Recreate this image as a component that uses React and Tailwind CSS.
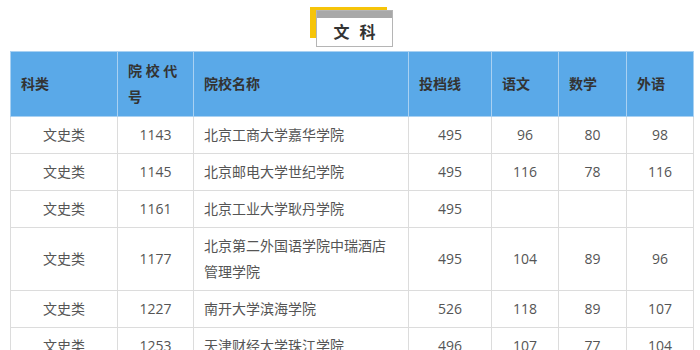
import React from 'react';

const rows = [
  { type: '文史类', code: '1143', name: '北京工商大学嘉华学院', line: '495', cn: '96', math: '80', en: '98' },
  { type: '文史类', code: '1145', name: '北京邮电大学世纪学院', line: '495', cn: '116', math: '78', en: '116' },
  { type: '文史类', code: '1161', name: '北京工业大学耿丹学院', line: '495', cn: '', math: '', en: '' },
  { type: '文史类', code: '1177', name: '北京第二外国语学院中瑞酒店管理学院', line: '495', cn: '104', math: '89', en: '96' },
  { type: '文史类', code: '1227', name: '南开大学滨海学院', line: '526', cn: '118', math: '89', en: '107' },
  { type: '文史类', code: '1253', name: '天津财经大学珠江学院', line: '496', cn: '107', math: '77', en: '104' },
];

const th = 'border border-[#a9d1f2] px-[10px] py-[6px] leading-[26px] text-left font-bold text-[14px] text-[#333]';
const td = 'border border-[#dcdcdc] px-[10px] py-[5px] leading-[26px] text-center text-[14px] text-[#555]';

export default function App() {
  return (
    <div
      className="w-[700px] h-[350px] overflow-hidden bg-white pl-[10px]"
      style={{ fontFamily: '"Open Sans", "Noto Sans CJK SC", sans-serif' }}
    >
      <div className="w-[683px]">
        <div className="relative mx-auto w-[83px] pt-[7px] mb-[4px]">
          <div className="absolute left-0 top-[7px] w-[77px] h-[31px] bg-[#f6c409]" />
          <div className="relative ml-[6px] mt-[3px] w-[77px] h-[37px] bg-white border border-[#b5b5b5] flex flex-col">
            <div className="h-[7px] bg-[#a8a8a8]" />
            <div className="flex-1 flex items-center justify-center font-bold text-[16px] text-[#333] tracking-[10px] pl-[10px]">
              文科
            </div>
          </div>
        </div>

        <table className="w-[683px] table-fixed border-collapse">
          <colgroup>
            <col className="w-[107px]" />
            <col className="w-[76px]" />
            <col className="w-[215px]" />
            <col className="w-[83px]" />
            <col className="w-[67px]" />
            <col className="w-[68px]" />
            <col className="w-[67px]" />
          </colgroup>
          <thead>
            <tr className="bg-[#5aa9e8]">
              <th className={th}>科类</th>
              <th className={`${th} text-justify`}>院 校 代 号</th>
              <th className={th}>院校名称</th>
              <th className={th}>投档线</th>
              <th className={th}>语文</th>
              <th className={th}>数学</th>
              <th className={th}>外语</th>
            </tr>
          </thead>
          <tbody>
            {rows.map((r) => (
              <tr key={r.code}>
                <td className={td}>{r.type}</td>
                <td className={td}>{r.code}</td>
                <td className={`${td} text-left`}>{r.name}</td>
                <td className={td}>{r.line}</td>
                <td className={td}>{r.cn}</td>
                <td className={td}>{r.math}</td>
                <td className={td}>{r.en}</td>
              </tr>
            ))}
          </tbody>
        </table>
      </div>
    </div>
  );
}
